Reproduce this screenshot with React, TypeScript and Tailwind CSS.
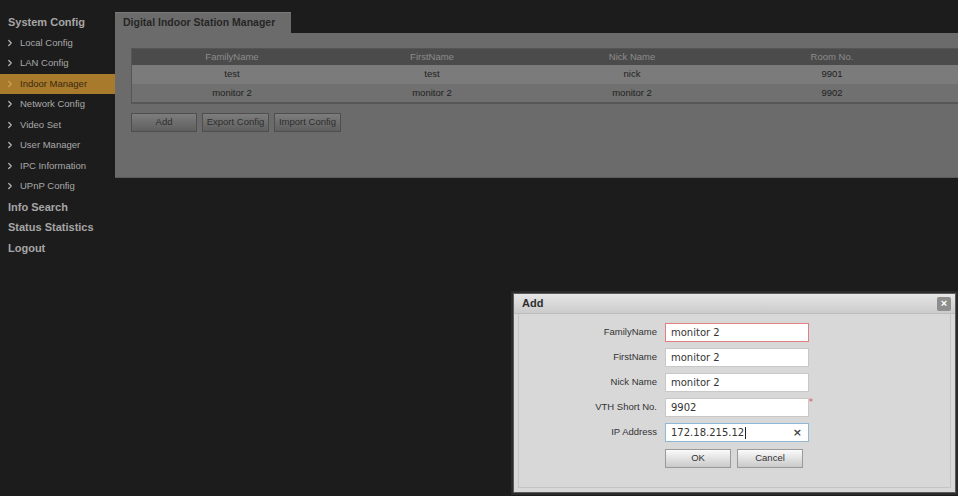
import { ChevronRight } from "lucide-react";

/* ─── Data ─── */
const SUB_ITEMS = [
    "Local Config",
    "LAN Config",
    "Indoor Manager",
    "Network Config",
    "Video Set",
    "User Manager",
    "IPC Information",
    "UPnP Config",
];

const COLUMNS = ["FamilyName", "FirstName", "Nick Name", "Room No."];

const ROWS = [
    ["test", "test", "nick", "9901"],
    ["monitor 2", "monitor 2", "monitor 2", "9902"],
];

const FIELDS = [
    { label: "FamilyName",    value: "monitor 2",     border: "border-[#e08080]" },
    { label: "FirstName",     value: "monitor 2",     border: "border-[#c8c8c8]" },
    { label: "Nick Name",     value: "monitor 2",     border: "border-[#c8c8c8]" },
    { label: "VTH Short No.", value: "9902",          border: "border-[#c8c8c8]", required: true },
    { label: "IP Address",    value: "172.18.215.12", border: "border-[#8fb8d8]", clear: true },
];

const FONT = "font-['Liberation_Sans',Arial,sans-serif]";

export default function App() {
    return (
        <div className={`relative w-[958px] h-[496px] overflow-hidden bg-[#1c1c1c] flex ${FONT}`}>
            {/* ── Sidebar ── */}
            <aside className="w-[115px] flex-shrink-0 pt-[12px] flex flex-col">
                <div className="h-[20.5px] flex items-center pl-[8px] text-[11px] font-bold text-[#a6a6a6]">System Config</div>
                {SUB_ITEMS.map(item => {
                    const active = item === "Indoor Manager";
                    return (
                        <div key={item}
                            className={`h-[20.5px] flex items-center pl-[5px] gap-[5px] text-[9.5px] ${active ? "bg-[#a87a2c] text-[#3b2a10]" : "text-[#a9a9a9]"}`}>
                            <ChevronRight className={`w-[10px] h-[10px] ${active ? "text-[#d0a050]" : "text-[#b5b5b5]"}`} strokeWidth={3} />
                            {item}
                        </div>
                    );
                })}
                {["Info Search", "Status Statistics", "Logout"].map(h => (
                    <div key={h} className="h-[20.5px] flex items-center pl-[8px] text-[11px] font-bold text-[#a6a6a6]">{h}</div>
                ))}
            </aside>

            {/* ── Main panel ── */}
            <main className="flex-1 pt-[12px] flex flex-col">
                <div className="flex h-[21px]">
                    <div className="w-[176px] bg-[#6b6b6b] border-t border-[#7a7a7a] flex items-center pl-[8px] text-[10.5px] font-bold text-[#262626]">
                        Digital Indoor Station Manager
                    </div>
                </div>
                <div className="h-[145px] bg-[#6b6b6b] border-b border-[#5a5a5a] pt-[15px] pl-[16px]">
                    {/* Table */}
                    <div className="border border-[#555] border-r-0 border-b-2 border-b-[#575757]">
                        <div className="grid grid-cols-[200px_200px_200px_200px_1fr] h-[16px] bg-[#4b4b4b] items-center text-[9.5px] text-[#8c8c8c]">
                            {COLUMNS.map(c => <div key={c} className="text-center">{c}</div>)}
                            <div />
                        </div>
                        {ROWS.map((r, i) => (
                            <div key={i}
                                className={`grid grid-cols-[200px_200px_200px_200px_1fr] items-center text-[9.5px] text-[#222] ${i === 0 ? "h-[19px] bg-[#7b7b7b]" : "h-[18px] bg-[#707070]"}`}>
                                {r.map((v, j) => <div key={j} className="text-center">{v}</div>)}
                                <div />
                            </div>
                        ))}
                    </div>
                    {/* Buttons */}
                    <div className="flex gap-[5px] mt-[9px]">
                        {[["Add", "w-[66px]"], ["Export Config", "w-[67px]"], ["Import Config", "w-[67px]"]].map(([t, w]) => (
                            <button key={t}
                                className={`${w} h-[19px] border border-[#4e4e4e] bg-gradient-to-b from-[#7d7d7d] to-[#5f5f5f] text-[9.5px] text-[#2e2e2e]`}>
                                {t}
                            </button>
                        ))}
                    </div>
                </div>
            </main>

            {/* ── Add dialog (overlay) ── */}
            <div className="absolute left-[513px] top-[293px] w-[443px] h-[200px] border border-[#5a5a5a] bg-[#d8d8d8] flex flex-col shadow-[0_0_0_2px_#2a2a2a]">
                <div className="h-[20px] flex items-center justify-between pl-[8px] pr-[4px] bg-gradient-to-b from-[#e6e6e6] to-[#cbcbcb] border-b border-[#bdbdbd]">
                    <span className="text-[11px] font-bold text-[#2e2e2e]">Add</span>
                    <div className="w-[14px] h-[14px] bg-[#8e8e8e] rounded-[2px] flex items-center justify-center text-white text-[11px] font-bold leading-none">×</div>
                </div>
                <div className="flex-1 mx-[4px] mb-[4px] border-x border-b border-[#c4c4c4] pt-[9px] flex flex-col gap-[6px]">
                    {FIELDS.map(f => (
                        <div key={f.label} className="flex items-center gap-[8px]">
                            <span className="w-[138px] text-right text-[9.5px] text-[#333]">{f.label}</span>
                            <div className={`relative w-[144px] h-[19px] bg-white border ${f.border} flex items-center pl-[5px] font-['DejaVu_Sans',sans-serif] text-[10px] text-[#333]`}>
                                {f.value}
                                {f.clear && <span className="w-px h-[12px] bg-[#222] ml-px" />}
                                {f.clear && <span className="absolute right-[6px] top-[1px] text-[11px] font-bold text-[#444]">×</span>}
                                {f.required && <span className="absolute -right-[5px] -top-[2px] text-[8px] text-[#d05050]">*</span>}
                            </div>
                        </div>
                    ))}
                    <div className="flex gap-[6px] pl-[146px] mt-px">
                        {["OK", "Cancel"].map(t => (
                            <button key={t}
                                className="w-[66px] h-[19px] border border-[#9a9a9a] bg-gradient-to-b from-[#fbfbfb] to-[#c9c9c9] text-[9.5px] text-[#333]">
                                {t}
                            </button>
                        ))}
                    </div>
                </div>
            </div>
        </div>
    );
}
